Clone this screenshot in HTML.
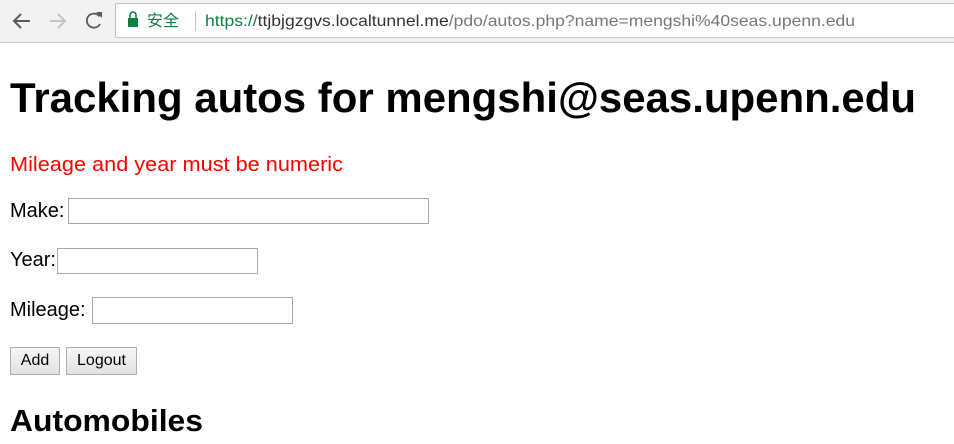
<!DOCTYPE html>
<html><head><meta charset="utf-8">
<style>
html,body{margin:0;padding:0;width:954px;height:444px;overflow:hidden;background:#fff;font-family:"Liberation Sans","Noto Sans CJK SC",sans-serif;}
.bar{position:absolute;left:0;top:0;width:954px;height:42px;background:#f2f2f2;border-bottom:1px solid #c6c6c6;}
.omni{position:absolute;left:115px;top:3px;width:850px;height:33px;background:#fff;border:1px solid #c4c4c4;border-radius:2px;}
.abs{position:absolute;}
.lbl{position:absolute;left:10px;font-size:20px;color:#000;}
.inp{position:absolute;height:24px;border:1px solid #a9a9a9;background:#fff;}
.btn{position:absolute;top:347px;height:26px;border:1px solid #adadad;background:linear-gradient(#f6f6f6,#e2e2e2);font-size:16px;line-height:26px;text-align:center;color:#000;border-radius:1px;}
</style></head><body>
<div class="bar"></div>
<svg class="abs" style="left:0;top:0" width="115" height="42">
<path d="M30 21H15M21 14l-7 7 7 7" fill="none" stroke="#5a5a5a" stroke-width="2"/>
<path d="M50 21h14M58 14l7 7-7 7" fill="none" stroke="#c4c4c4" stroke-width="2"/>
<path d="M99.5 16.5A7 7 0 1 0 100 24" fill="none" stroke="#5a5a5a" stroke-width="1.8"/>
<path d="M96 12h6v6z" fill="#5a5a5a"/>
</svg>
<div class="omni"></div>
<svg class="abs" style="left:0;top:0" width="954" height="42">
<rect x="128" y="18" width="10" height="9" fill="#0b8043"/>
<path d="M130 18v-3a3 3 0 0 1 6 0v3" fill="none" stroke="#0b8043" stroke-width="1.6"/>
<text x="147" y="26" font-size="16" fill="#0b8043" font-family="'Noto Sans CJK SC',sans-serif">安全</text>
<rect x="195" y="11" width="1" height="20" fill="#c4c4c4"/>
<text x="205" y="26" font-size="16" font-family="'Liberation Sans',sans-serif" textLength="650" lengthAdjust="spacingAndGlyphs"><tspan fill="#0b8043">https://</tspan><tspan fill="#333">ttjbjgzgvs.localtunnel.me</tspan><tspan fill="#777">/pdo/autos.php?name=mengshi%40seas.upenn.edu</tspan></text>
</svg>
<svg class="abs" style="left:0;top:44px" width="954" height="400">
<text x="10" y="68" font-size="42" font-weight="bold" font-family="'Liberation Sans',sans-serif" textLength="906" lengthAdjust="spacingAndGlyphs">Tracking autos for mengshi@seas.upenn.edu</text>
<text x="10" y="127" font-size="20" fill="#ff0000" font-family="'Liberation Sans',sans-serif" textLength="333" lengthAdjust="spacingAndGlyphs">Mileage and year must be numeric</text>
<text x="10" y="387" font-size="31" font-weight="bold" font-family="'Liberation Sans',sans-serif" textLength="193" lengthAdjust="spacingAndGlyphs">Automobiles</text>
</svg>
<div class="lbl" style="top:200px">Make:</div>
<div class="inp" style="left:68px;top:198px;width:359px"></div>
<div class="lbl" style="top:249px">Year:</div>
<div class="inp" style="left:57px;top:248px;width:199px"></div>
<div class="lbl" style="top:299px">Mileage:</div>
<div class="inp" style="left:92px;top:297px;width:199px;height:25px"></div>
<div class="btn" style="left:10px;width:48px">Add</div>
<div class="btn" style="left:66px;width:69px">Logout</div>
</body></html>
